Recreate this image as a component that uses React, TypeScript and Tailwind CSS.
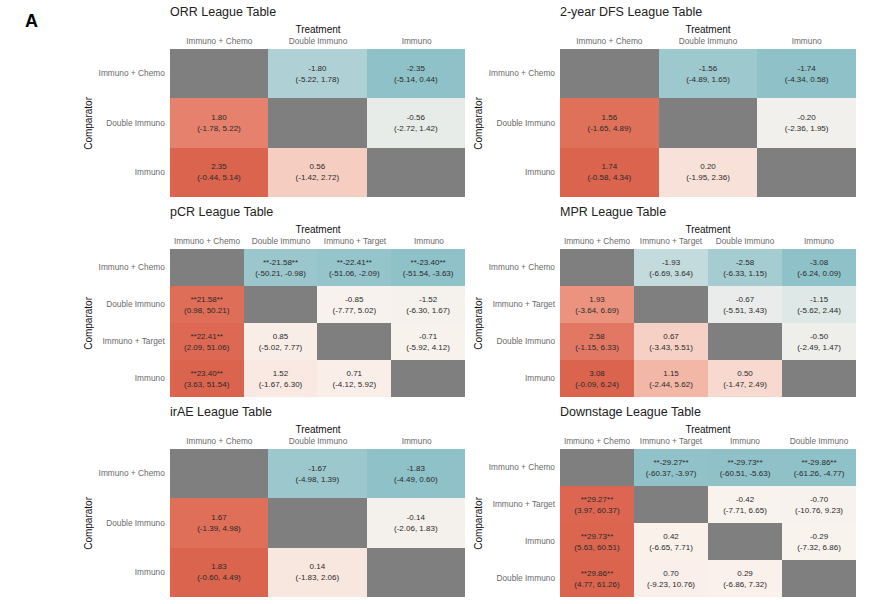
type Pair = [number, number, number, boolean?];

interface LeagueData {
  title: string;
  labels: string[];
  // upper triangle, row i holds cells j > i
  upper: Pair[][];
}

const tables: LeagueData[] = [
  {
    title: "ORR League Table",
    labels: ["Immuno + Chemo", "Double Immuno", "Immuno"],
    upper: [
      [
        [-1.8, -5.22, 1.78],
        [-2.35, -5.14, 0.44],
      ],
      [[-0.56, -2.72, 1.42]],
    ],
  },
  {
    title: "2-year DFS League Table",
    labels: ["Immuno + Chemo", "Double Immuno", "Immuno"],
    upper: [
      [
        [-1.56, -4.89, 1.65],
        [-1.74, -4.34, 0.58],
      ],
      [[-0.2, -2.36, 1.95]],
    ],
  },
  {
    title: "pCR League Table",
    labels: ["Immuno + Chemo", "Double Immuno", "Immuno + Target", "Immuno"],
    upper: [
      [
        [-21.58, -50.21, -0.98, true],
        [-22.41, -51.06, -2.09, true],
        [-23.4, -51.54, -3.63, true],
      ],
      [
        [-0.85, -7.77, 5.02],
        [-1.52, -6.3, 1.67],
      ],
      [[-0.71, -5.92, 4.12]],
    ],
  },
  {
    title: "MPR League Table",
    labels: ["Immuno + Chemo", "Immuno + Target", "Double Immuno", "Immuno"],
    upper: [
      [
        [-1.93, -6.69, 3.64],
        [-2.58, -6.33, 1.15],
        [-3.08, -6.24, 0.09],
      ],
      [
        [-0.67, -5.51, 3.43],
        [-1.15, -5.62, 2.44],
      ],
      [[-0.5, -2.49, 1.47]],
    ],
  },
  {
    title: "irAE League Table",
    labels: ["Immuno + Chemo", "Double Immuno", "Immuno"],
    upper: [
      [
        [-1.67, -4.98, 1.39],
        [-1.83, -4.49, 0.6],
      ],
      [[-0.14, -2.06, 1.83]],
    ],
  },
  {
    title: "Downstage League Table",
    labels: ["Immuno + Chemo", "Immuno + Target", "Immuno", "Double Immuno"],
    upper: [
      [
        [-29.27, -60.37, -3.97, true],
        [-29.73, -60.51, -5.63, true],
        [-29.86, -61.26, -4.77, true],
      ],
      [
        [-0.42, -7.71, 6.65],
        [-0.7, -10.76, 9.23],
      ],
      [[-0.29, -7.32, 6.86]],
    ],
  },
];

type RGB = [number, number, number];

const MID: RGB = [250, 243, 238];
const TEAL_HALF: RGB = [212, 228, 228];
const TEAL: RGB = [143, 193, 200];
const RED_HALF: RGB = [240, 163, 143];
const RED: RGB = [219, 100, 78];

const mix = (a: RGB, b: RGB, s: number): RGB =>
  [0, 1, 2].map((k) => Math.round(a[k] + (b[k] - a[k]) * s)) as RGB;

// diverging scale: teal (negative) -> cream -> red (positive)
function fillFor(t: number) {
  const a = Math.min(1, Math.abs(t));
  const [half, end] = t < 0 ? [TEAL_HALF, TEAL] : [RED_HALF, RED];
  const c = a <= 0.5 ? mix(MID, half, a / 0.5) : mix(half, end, (a - 0.5) / 0.5);
  return `rgb(${c[0]}, ${c[1]}, ${c[2]})`;
}

const fmt = (n: number) => n.toFixed(2);

function cellAt(data: LeagueData, i: number, j: number) {
  if (i === j) return null;
  if (j > i) {
    const [v, lo, hi, sig] = data.upper[i][j - i - 1];
    return { v, lo, hi, sig: !!sig };
  }
  const [v, lo, hi, sig] = data.upper[j][i - j - 1];
  return { v: -v, lo: -hi, hi: -lo, sig: !!sig };
}

function LeagueTable({ data }: { data: LeagueData }) {
  const n = data.labels.length;
  const max = Math.max(...data.upper.flat().map((p) => Math.abs(p[0])));
  const gridCls = n === 4 ? "grid-cols-4 grid-rows-4" : "grid-cols-3 grid-rows-3";
  const rowsCls = n === 4 ? "grid-rows-4" : "grid-rows-3";

  return (
    <div className="h-[200px] flex flex-col">
      {/* header */}
      <div className="ml-[88px] w-[296px] pt-[5px] mb-[3px]">
        <div className="text-[12.5px] leading-[14px] text-[#222]">{data.title}</div>
        <div className="mt-[5px] text-center text-[10px] leading-[12px] text-[#111]">Treatment</div>
        <div className={n === 4 ? "grid grid-cols-4" : "grid grid-cols-3"}>
          {data.labels.map((l) => (
            <div key={l} className="text-center text-[8.3px] leading-[10px] text-[#6a6a6a] whitespace-nowrap">
              {l}
            </div>
          ))}
        </div>
      </div>

      {/* body */}
      <div className="flex h-[148px]">
        <div className="w-[14px] flex items-center justify-center">
          <span className="[writing-mode:vertical-rl] rotate-180 text-[10px] leading-[12px] text-[#111]">
            Comparator
          </span>
        </div>
        <div className={`w-[69px] grid ${rowsCls}`}>
          {data.labels.map((l) => (
            <div key={l} className="flex items-center justify-end text-[8.3px] text-[#6a6a6a] whitespace-nowrap">
              {l}
            </div>
          ))}
        </div>
        <div className={`ml-[5px] w-[296px] grid ${gridCls}`}>
          {data.labels.map((_, i) =>
            data.labels.map((__, j) => {
              const c = cellAt(data, i, j);
              if (!c) return <div key={`${i}-${j}`} className="bg-[#7f7f7f]" />;
              const star = c.sig ? "**" : "";
              return (
                <div
                  key={`${i}-${j}`}
                  className="flex flex-col items-center justify-center text-[8px] leading-[11px] text-[#2a2a2a] whitespace-nowrap"
                  style={{ backgroundColor: fillFor(c.v / max) }}
                >
                  <span>
                    {star}
                    {fmt(c.v)}
                    {star}
                  </span>
                  <span>
                    ({fmt(c.lo)}, {fmt(c.hi)})
                  </span>
                </div>
              );
            })
          )}
        </div>
      </div>
    </div>
  );
}

export default function App() {
  return (
    <div className="w-[885px] h-[604px] bg-white flex overflow-hidden font-['Liberation_Sans',Arial,sans-serif]">
      <div className="w-[82px] shrink-0 pl-[25px] pt-[11px] text-[18px] leading-[20px] font-bold text-black">A</div>
      <div className="grid grid-cols-[383px_384px] gap-x-[7px] content-start">
        {tables.map((t) => (
          <LeagueTable key={t.title} data={t} />
        ))}
      </div>
    </div>
  );
}
